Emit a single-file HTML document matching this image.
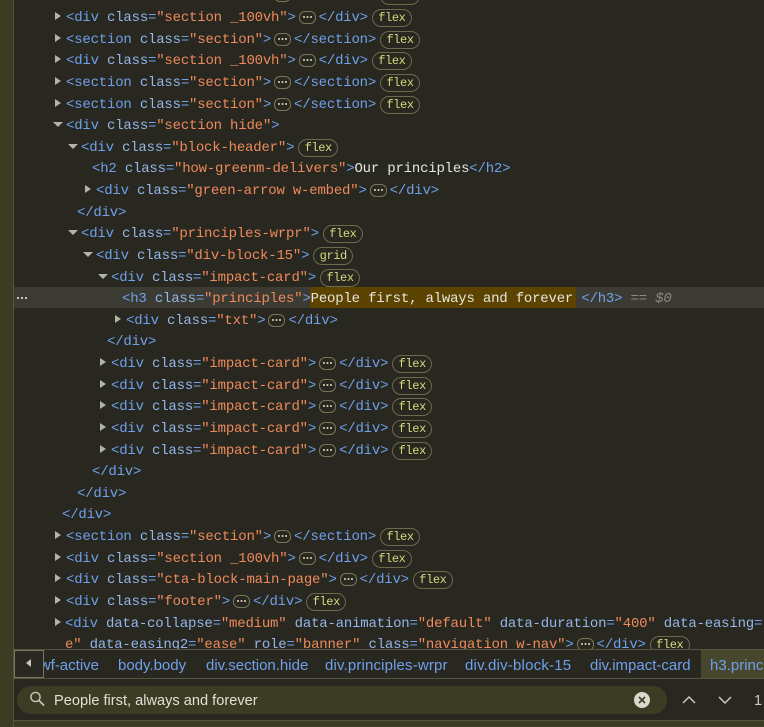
<!DOCTYPE html>
<html><head><meta charset="utf-8"><style>
html,body{margin:0;padding:0;background:#282820;width:764px;height:727px;overflow:hidden}
#tree{position:absolute;left:14px;top:0;width:750px;height:649px;overflow:hidden}
#in{position:absolute;left:-14px;top:-13.6px;width:764px}
.l{height:21.63px;line-height:21.63px;white-space:pre;position:relative;font-family:"Liberation Mono",monospace;font-size:14px;letter-spacing:-.2px;color:#6fa0ec;width:764px;overflow:visible}
.a{color:#94b6ea}.v{color:#ee8a5c}.n{color:#e6e6e0}
.c,.o{position:absolute;width:0;height:0;top:7px}
.c{border-left:6px solid #b3b3a6;border-top:4.5px solid transparent;border-bottom:4.5px solid transparent;margin-left:-11px;top:4px}
.o{border-top:5px solid #b3b3a6;border-left:5px solid transparent;border-right:5px solid transparent;margin-left:-13px;top:6px}
.f{display:inline-block;box-sizing:border-box;height:18px;line-height:16px;width:40px;border:1px solid #6a6a4c;border-radius:9px;color:#d8d87e;font-size:12px;letter-spacing:-.4px;text-align:center;margin-left:4px;vertical-align:0;font-family:"Liberation Mono",monospace}
.e{display:inline-block;box-sizing:border-box;width:17px;height:13px;border:1px solid #77775a;border-radius:6px;margin:0 3px;vertical-align:-3px;position:relative}
.e:after{content:"";position:absolute;left:3px;top:4px;width:2px;height:2px;background:#dcdcc0;box-shadow:3.5px 0 #dcdcc0,7px 0 #dcdcc0;border-radius:1px}
#sel{position:absolute;left:14px;top:287px;width:750px;height:21px;background:#3b3b33}
#hl{position:absolute;left:310px;top:287px;width:266px;height:21px;background:#5c4300}
#dots{position:absolute;left:17px;top:297px;width:2px;height:2px;background:#c8c8c0;box-shadow:4px 0 #c8c8c0,8px 0 #c8c8c0}
#gut{position:absolute;left:0;top:0;width:13px;height:727px;background:#3c3c24;border-right:1px solid #55553a}
#bc{position:absolute;left:14px;top:649px;width:750px;height:30px;border-top:1px solid #55553f;border-bottom:1px solid #55553f;box-sizing:border-box;overflow:hidden;background:#282820;font:15px/31px "Liberation Sans",sans-serif;color:#6fa0ec}
#bc span{position:absolute;top:0;white-space:nowrap}
#bk{position:absolute;left:0;top:0;width:30px;height:28px;box-sizing:border-box;border:1px solid #77776a;background:#282820}
#bk:after{content:"";position:absolute;left:11px;top:8px;border-right:5px solid #c8c8c0;border-top:4px solid transparent;border-bottom:4px solid transparent}
#hh{position:absolute;left:687px;top:0;width:63px;height:28px;background:#47472d}
#sb{position:absolute;left:17px;top:686px;width:650px;height:28px;background:#3c3c24;border-radius:14px}
#st{position:absolute;left:54px;top:692px;font:14.6px/18px "Liberation Sans",sans-serif;color:#e0e0d8;white-space:nowrap}
#bot{position:absolute;left:14px;top:720px;width:750px;height:7px;background:#3c3c24;border-top:1px solid #55553a;box-sizing:border-box}
#one{position:absolute;left:754px;top:692px;font:14.6px/18px "Liberation Sans",sans-serif;color:#c8c8c0}
svg{position:absolute}
</style></head><body>
<div id="sel"></div><div id="hl"></div><div id="dots"></div>
<div id="tree"><div id="in">
<div class="l" style="padding-left:66px"><span class="c"></span>&lt;section <span class="a">class</span>=<span class="v">"section"</span>&gt;<span class="e"></span>&lt;/section&gt;<span class="f">flex</span></div>
<div class="l" style="padding-left:66px"><span class="c"></span>&lt;div <span class="a">class</span>=<span class="v">"section _100vh"</span>&gt;<span class="e"></span>&lt;/div&gt;<span class="f">flex</span></div>
<div class="l" style="padding-left:66px"><span class="c"></span>&lt;section <span class="a">class</span>=<span class="v">"section"</span>&gt;<span class="e"></span>&lt;/section&gt;<span class="f">flex</span></div>
<div class="l" style="padding-left:66px"><span class="c"></span>&lt;div <span class="a">class</span>=<span class="v">"section _100vh"</span>&gt;<span class="e"></span>&lt;/div&gt;<span class="f">flex</span></div>
<div class="l" style="padding-left:66px"><span class="c"></span>&lt;section <span class="a">class</span>=<span class="v">"section"</span>&gt;<span class="e"></span>&lt;/section&gt;<span class="f">flex</span></div>
<div class="l" style="padding-left:66px"><span class="c"></span>&lt;section <span class="a">class</span>=<span class="v">"section"</span>&gt;<span class="e"></span>&lt;/section&gt;<span class="f">flex</span></div>
<div class="l" style="padding-left:66px"><span class="o"></span>&lt;div <span class="a">class</span>=<span class="v">"section hide"</span>&gt;</div>
<div class="l" style="padding-left:81px"><span class="o"></span>&lt;div <span class="a">class</span>=<span class="v">"block-header"</span>&gt;<span class="f">flex</span></div>
<div class="l" style="padding-left:92px">&lt;h2 <span class="a">class</span>=<span class="v">"how-greenm-delivers"</span>&gt;<span class="n">Our principles</span>&lt;/h2&gt;</div>
<div class="l" style="padding-left:96px"><span class="c"></span>&lt;div <span class="a">class</span>=<span class="v">"green-arrow w-embed"</span>&gt;<span class="e"></span>&lt;/div&gt;</div>
<div class="l" style="padding-left:77px">&lt;/div&gt;</div>
<div class="l" style="padding-left:81px"><span class="o"></span>&lt;div <span class="a">class</span>=<span class="v">"principles-wrpr"</span>&gt;<span class="f">flex</span></div>
<div class="l" style="padding-left:96px"><span class="o"></span>&lt;div <span class="a">class</span>=<span class="v">"div-block-15"</span>&gt;<span class="f">grid</span></div>
<div class="l" style="padding-left:111px"><span class="o"></span>&lt;div <span class="a">class</span>=<span class="v">"impact-card"</span>&gt;<span class="f">flex</span></div>
<div class="l" style="padding-left:122px">&lt;h3 <span class="a">class</span>=<span class="v">"principles"</span>&gt;<span class="n">People first, always and forever</span> &lt;/h3&gt; <span style="color:#8a8a80">==</span> <span style="color:#8a8a80;font-style:italic">$0</span></div>
<div class="l" style="padding-left:126px"><span class="c"></span>&lt;div <span class="a">class</span>=<span class="v">"txt"</span>&gt;<span class="e"></span>&lt;/div&gt;</div>
<div class="l" style="padding-left:107px">&lt;/div&gt;</div>
<div class="l" style="padding-left:111px"><span class="c"></span>&lt;div <span class="a">class</span>=<span class="v">"impact-card"</span>&gt;<span class="e"></span>&lt;/div&gt;<span class="f">flex</span></div>
<div class="l" style="padding-left:111px"><span class="c"></span>&lt;div <span class="a">class</span>=<span class="v">"impact-card"</span>&gt;<span class="e"></span>&lt;/div&gt;<span class="f">flex</span></div>
<div class="l" style="padding-left:111px"><span class="c"></span>&lt;div <span class="a">class</span>=<span class="v">"impact-card"</span>&gt;<span class="e"></span>&lt;/div&gt;<span class="f">flex</span></div>
<div class="l" style="padding-left:111px"><span class="c"></span>&lt;div <span class="a">class</span>=<span class="v">"impact-card"</span>&gt;<span class="e"></span>&lt;/div&gt;<span class="f">flex</span></div>
<div class="l" style="padding-left:111px"><span class="c"></span>&lt;div <span class="a">class</span>=<span class="v">"impact-card"</span>&gt;<span class="e"></span>&lt;/div&gt;<span class="f">flex</span></div>
<div class="l" style="padding-left:92px">&lt;/div&gt;</div>
<div class="l" style="padding-left:77px">&lt;/div&gt;</div>
<div class="l" style="padding-left:62px">&lt;/div&gt;</div>
<div class="l" style="padding-left:66px"><span class="c"></span>&lt;section <span class="a">class</span>=<span class="v">"section"</span>&gt;<span class="e"></span>&lt;/section&gt;<span class="f">flex</span></div>
<div class="l" style="padding-left:66px"><span class="c"></span>&lt;div <span class="a">class</span>=<span class="v">"section _100vh"</span>&gt;<span class="e"></span>&lt;/div&gt;<span class="f">flex</span></div>
<div class="l" style="padding-left:66px"><span class="c"></span>&lt;div <span class="a">class</span>=<span class="v">"cta-block-main-page"</span>&gt;<span class="e"></span>&lt;/div&gt;<span class="f">flex</span></div>
<div class="l" style="padding-left:66px"><span class="c"></span>&lt;div <span class="a">class</span>=<span class="v">"footer"</span>&gt;<span class="e"></span>&lt;/div&gt;<span class="f">flex</span></div>
<div class="l" style="padding-left:65px"><span class="c" style="margin-left:-10px"></span>&lt;div <span class="a">data-collapse</span>=<span class="v">"medium"</span> <span class="a">data-animation</span>=<span class="v">"default"</span> <span class="a">data-duration</span>=<span class="v">"400"</span> <span class="a">data-easing</span>=</div>
<div class="l" style="padding-left:65px"><span class="v">e"</span> <span class="a">data-easing2</span>=<span class="v">"ease"</span> <span class="a">role</span>=<span class="v">"banner"</span> <span class="a">class</span>=<span class="v">"navigation w-nav"</span>&gt;<span class="e"></span>&lt;/div&gt;<span class="f">flex</span></div>
</div></div>
<div id="gut"></div>
<div id="bc">
<div id="hh"></div>
<span style="left:-1px;width:86px;text-align:right;overflow:hidden;direction:rtl"><bdi>wf-active</bdi></span>
<span style="left:104px">body.body</span>
<span style="left:192px">div.section.hide</span>
<span style="left:311px;letter-spacing:.15px">div.principles-wrpr</span>
<span style="left:451px;letter-spacing:.2px">div.div-block-15</span>
<span style="left:576px">div.impact-card</span>
<span style="left:696px">h3.principles</span>
<div id="bk"></div>
</div>
<div id="sb"></div>
<svg style="left:28px;top:690px" width="18" height="18" viewBox="0 0 18 18" fill="none" stroke="#c8c8c0" stroke-width="1.4"><circle cx="7.5" cy="7" r="4.6"/><path d="M11 10.5l5 5" stroke-width="1.7"/></svg>
<div id="st">People first, always and forever</div>
<svg style="left:634px;top:692px" width="16" height="16" viewBox="0 0 16 16"><circle cx="8" cy="8" r="8" fill="#d8d8cc"/><path d="M5 5l6 6M11 5l-6 6" stroke="#3c3c24" stroke-width="1.6"/></svg>
<svg style="left:682px;top:695px" width="14" height="10" viewBox="0 0 14 10" fill="none" stroke="#d0d0c8" stroke-width="1.4"><path d="M1 8l6-6 6 6"/></svg>
<svg style="left:718px;top:695px" width="14" height="10" viewBox="0 0 14 10" fill="none" stroke="#d0d0c8" stroke-width="1.4"><path d="M1 2l6 6 6-6"/></svg>
<div id="one">1</div>
<div id="bot"></div>
</body></html>
